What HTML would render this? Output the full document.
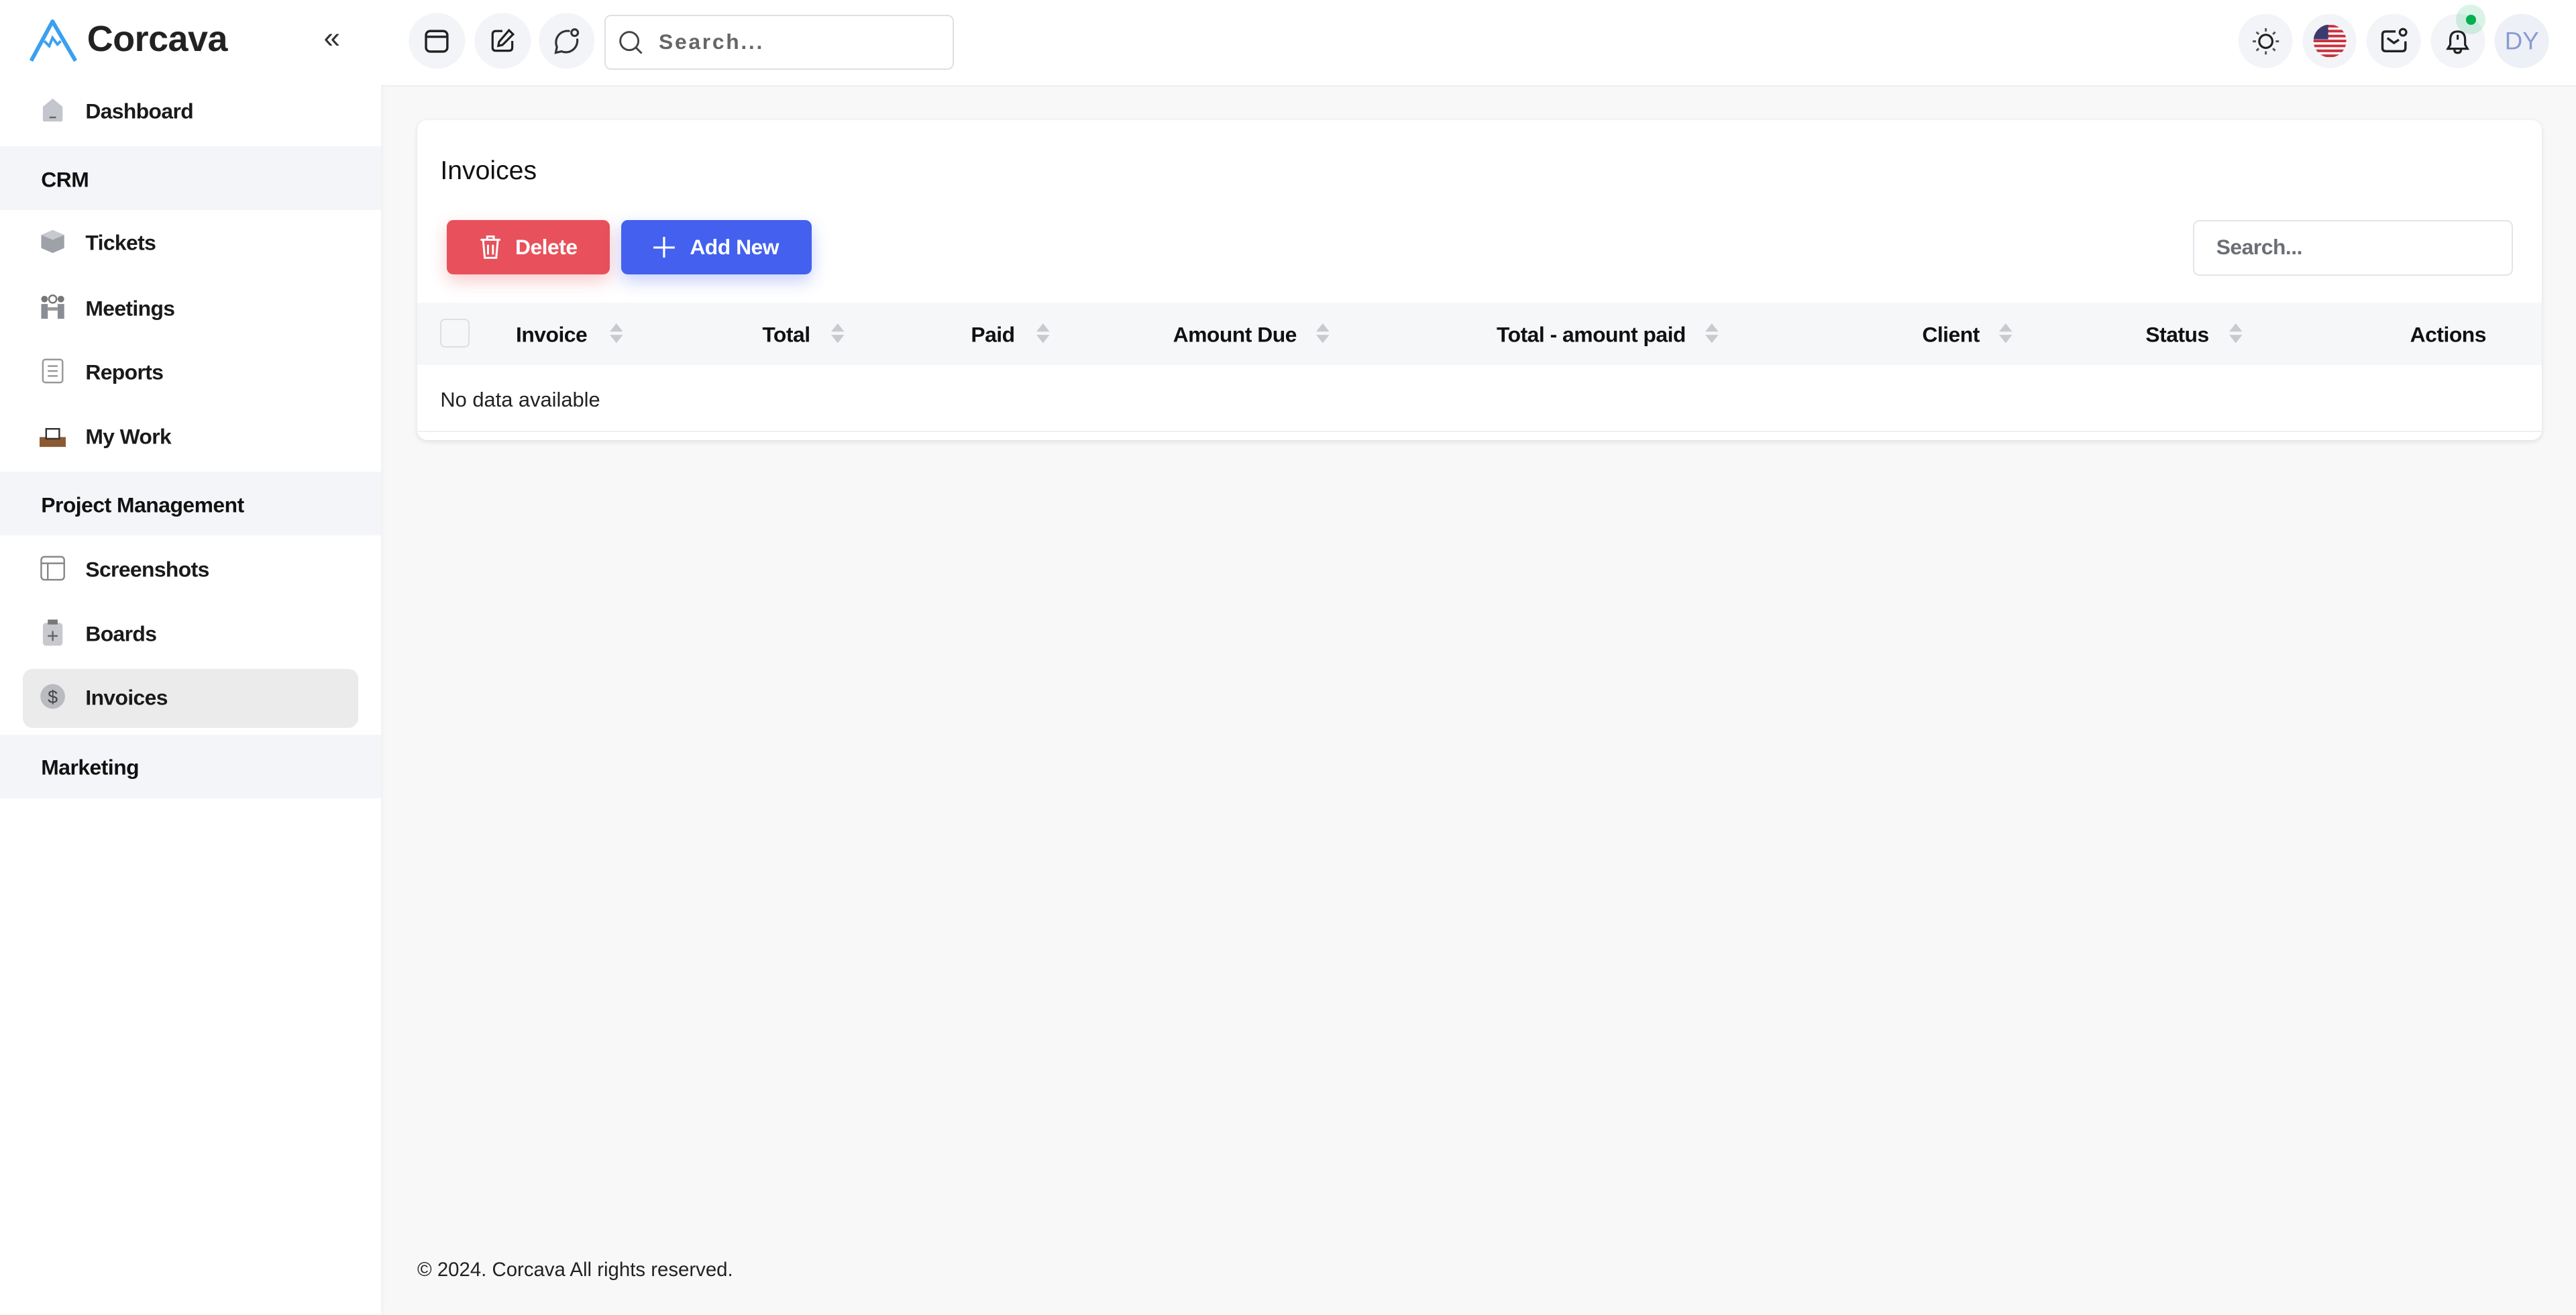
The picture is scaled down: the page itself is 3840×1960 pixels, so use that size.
<!DOCTYPE html>
<html><head><meta charset="utf-8"><style>
html,body{margin:0;padding:0;width:3840px;height:1960px;overflow:hidden;background:#f8f8f9}
#w{zoom:2.449;width:1568px;height:800px;position:relative;font-family:"Liberation Sans",sans-serif;color:#111}
.a{position:absolute}
.side{left:0;top:0;width:232px;height:800px;background:#fff;box-shadow:1px 0 3px rgba(0,0,0,.04)}
.item{position:absolute;left:52px;font-size:13px;font-weight:bold;color:#1a1a1a;transform:translateY(-45%);letter-spacing:-.25px}
.band{position:absolute;left:0;width:232px;height:39px;background:#f4f5f9}
.band span{position:absolute;left:25px;top:50%;transform:translateY(-45%);font-size:13px;font-weight:bold;color:#111;letter-spacing:-.2px}
.ic{position:absolute;left:24px;width:16px;height:16px;transform:translateY(-50%)}
.hdr{left:232px;top:0;width:1336px;height:52px;background:#fff;border-bottom:1px solid #eceef1}
.cb{position:absolute;width:34px;height:34px;border-radius:50%;background:#f3f4f7;transform:translate(-50%,-50%);top:25px;display:flex;align-items:center;justify-content:center}
.card{left:254px;top:73px;width:1293px;height:195px;background:#fff;border-radius:6px;box-shadow:0 1px 3px rgba(0,0,0,.1)}
.th{position:absolute;top:203px;font-size:13px;font-weight:bold;transform:translateY(-45%);letter-spacing:-.2px}
.sort{position:absolute;top:197px;width:8px;height:12px}
</style></head><body><div id="w">
<div class="a side">
<svg class="a" style="left:18px;top:11px" width="29" height="27" viewBox="0 0 29 27"><path d="M1 26 L14 2 L28 26" fill="none" stroke="#3aa0f0" stroke-width="2.4" stroke-linejoin="round"/><path d="M9 14 L12 17 L14 12 L17 16 L19 14" fill="none" stroke="#3aa0f0" stroke-width="1.6"/></svg>
<div class="a" style="left:53px;top:11px;font-size:22px;font-weight:bold;color:#222;letter-spacing:-.2px">Corcava</div>
<div class="a" style="left:197px;top:13px;font-size:18px;color:#333">«</div>
<svg class="ic" style="top:67px" viewBox="0 0 16 16"><path d="M2 6 L8 1 L14 6 V14 Q14 15 13 15 H3 Q2 15 2 14Z" fill="#c3c6cc"/><rect x="6" y="12" width="4" height="1" fill="#666"/></svg>
<div class="item" style="top:67px">Dashboard</div>
<div class="band" style="top:89px"><span>CRM</span></div>
<svg class="ic" style="top:147px" viewBox="0 0 16 16"><path d="M8 1 L15 4 V12 L8 15 L1 12 V4Z" fill="#9ea1a8"/><path d="M1 4 L8 7 L15 4 L8 1Z" fill="#c7c9ce"/></svg>
<div class="item" style="top:147px">Tickets</div>
<svg class="ic" style="top:187px" viewBox="0 0 16 16"><circle cx="3" cy="3" r="2" fill="#777"/><circle cx="13" cy="3" r="2" fill="#777"/><circle cx="8" cy="3" r="2.3" fill="none" stroke="#777"/><rect x="1" y="6" width="4" height="9" fill="#8a8d94"/><rect x="11" y="6" width="4" height="9" fill="#8a8d94"/><rect x="5" y="8" width="6" height="2" fill="#999"/></svg>
<div class="item" style="top:187px">Meetings</div>
<svg class="ic" style="top:226px" viewBox="0 0 16 16"><rect x="2" y="1" width="12" height="14" rx="1.5" fill="none" stroke="#999"/><path d="M5 5h6M5 8h6M5 11h6" stroke="#999"/></svg>
<div class="item" style="top:226px">Reports</div>
<svg class="ic" style="top:265px" viewBox="0 0 16 16"><rect x="0" y="9" width="16" height="6" fill="#8b5a33"/><rect x="4" y="4" width="8" height="6" fill="#fff" stroke="#333"/></svg>
<div class="item" style="top:265px">My Work</div>
<div class="band" style="top:287px"><span>Project Management</span></div>
<svg class="ic" style="top:346px" viewBox="0 0 16 16"><rect x="1" y="1" width="14" height="14" rx="2" fill="none" stroke="#888"/><path d="M1 5h14M5 5v10" stroke="#888"/></svg>
<div class="item" style="top:346px">Screenshots</div>
<svg class="ic" style="top:385px" viewBox="0 0 16 16"><rect x="2" y="2" width="12" height="14" rx="2" fill="#c7c9ce"/><rect x="5" y="0" width="6" height="3" fill="#777"/><path d="M8 7v6M5 10h6" stroke="#666"/></svg>
<div class="item" style="top:385px">Boards</div>
<div class="a" style="left:14px;top:407px;width:204px;height:36px;background:#ebebeb;border-radius:6px"></div>
<svg class="ic" style="top:424px" viewBox="0 0 16 16"><circle cx="8" cy="8" r="7.5" fill="#b9bbc0"/><text x="8" y="12" font-size="11" text-anchor="middle" fill="#444" font-family="Liberation Sans">$</text></svg>
<div class="item" style="top:424px">Invoices</div>
<div class="band" style="top:447px"><span>Marketing</span></div>
</div>
<div class="a hdr"></div>
<div class="cb" style="left:266px"><svg width="16" height="16" viewBox="0 0 16 16"><rect x="1.5" y="2" width="13" height="12.5" rx="2.5" fill="none" stroke="#222" stroke-width="1.4"/><path d="M1.5 5.5h13" stroke="#222" stroke-width="1.4"/></svg></div>
<div class="cb" style="left:306px"><svg width="16" height="16" viewBox="0 0 16 16"><path d="M8 2H4Q2 2 2 4v8q0 2 2 2h8q2 0 2-2V8" fill="none" stroke="#222" stroke-width="1.3"/><path d="M12 1.5l2.5 2.5L8 10.5 5.5 11 6 8.5Z" fill="none" stroke="#222" stroke-width="1.3"/></svg></div>
<div class="cb" style="left:345px"><svg width="18" height="18" viewBox="0 0 18 18"><path d="M10.5 2.8A7 7 0 0 0 3.2 12.5L2.5 16 6 15.2A7 7 0 0 0 15.6 8" fill="none" stroke="#333" stroke-width="1.3" stroke-linecap="round"/><circle cx="14" cy="3.8" r="2" fill="none" stroke="#333" stroke-width="1.3"/></svg></div>
<div class="a" style="left:368px;top:9px;width:211px;height:32px;border:1px solid #dde0e6;border-radius:4px;background:#fff"></div>
<svg class="a" style="left:376px;top:18px" width="16" height="16" viewBox="0 0 16 16"><circle cx="7" cy="7" r="5.5" fill="none" stroke="#444" stroke-width="1.2"/><path d="M11 11l3.5 3.5" stroke="#444" stroke-width="1.2"/></svg>
<div class="a" style="left:401px;top:18px;font-size:13px;font-weight:bold;letter-spacing:1.1px;color:#666">Search...</div>
<div class="cb" style="left:1379px;width:33px;height:33px"><svg width="18" height="18" viewBox="0 0 18 18"><circle cx="9" cy="9" r="4" fill="none" stroke="#222" stroke-width="1.3"/><path d="M9 1v2M9 15v2M1 9h2M15 9h2M3.3 3.3l1.4 1.4M13.3 13.3l1.4 1.4M3.3 14.7l1.4-1.4M13.3 4.7l1.4-1.4" stroke="#555" stroke-width="1.2"/></svg></div>
<div class="cb" style="left:1418px;width:33px;height:33px"><svg width="20" height="20" viewBox="0 0 20 20"><defs><clipPath id="c"><circle cx="10" cy="10" r="10"/></clipPath></defs><g clip-path="url(#c)"><rect width="20" height="20" fill="#fff"/><path d="M0 1h20M0 4h20M0 7h20M0 10h20M0 13h20M0 16h20M0 19h20" stroke="#c8323f" stroke-width="1.6"/><rect width="9" height="9" fill="#3c3b6e"/></g></svg></div>
<div class="cb" style="left:1457px;width:33px;height:33px"><svg width="18" height="18" viewBox="0 0 18 18"><path d="M10 3H4Q2 3 2 5v8q0 2 2 2h10q2 0 2-2V9" fill="none" stroke="#222" stroke-width="1.4"/><path d="M5 7l4 3 3-2" fill="none" stroke="#222" stroke-width="1.4"/><circle cx="14.5" cy="3.5" r="2" fill="none" stroke="#222" stroke-width="1.3"/></svg></div>
<div class="cb" style="left:1496px;width:33px;height:33px"><svg width="18" height="18" viewBox="0 0 18 18"><path d="M9 3Q4.5 3 4.5 8v3L3 13.5h12L13.5 11V8Q13.5 3 9 3ZM7 14q0 2 2 2t2-2" fill="none" stroke="#222" stroke-width="1.3"/><path d="M9 5v3" stroke="#222" stroke-width="1.3"/></svg></div>
<div class="a" style="left:1495px;top:3px;width:18px;height:18px;border-radius:50%;background:rgba(0,180,90,.15)"></div>
<div class="a" style="left:1501px;top:9px;width:6px;height:6px;border-radius:50%;background:#00b050"></div>
<div class="cb" style="left:1535px;width:33px;height:33px;background:#eef0f7;color:#8a9bd0;font-size:15px">DY</div>
<div class="a card"></div>
<div class="a" style="left:268px;top:95px;font-size:16px;color:#111">Invoices</div>
<div class="a" style="left:272px;top:134px;width:99px;height:33px;background:#e8505b;border-radius:4px;box-shadow:0 4px 10px rgba(232,80,91,.3);color:#fff;font-size:13px;font-weight:bold;display:flex;align-items:center;justify-content:center;gap:8px;letter-spacing:-.2px"><svg width="14" height="15" viewBox="0 0 14 15"><path d="M1 3h12M5 3V1h4v2M2.5 3l1 11h7l1-11M5.5 6v6M8.5 6v6" fill="none" stroke="#fff" stroke-width="1.2"/></svg>Delete</div>
<div class="a" style="left:378px;top:134px;width:116px;height:33px;background:#4361ee;border-radius:4px;box-shadow:0 4px 10px rgba(67,97,238,.3);color:#fff;font-size:13px;font-weight:bold;display:flex;align-items:center;justify-content:center;gap:9px;letter-spacing:-.2px"><svg width="13" height="13" viewBox="0 0 13 13"><path d="M6.5 0v13M0 6.5h13" stroke="#fff" stroke-width="1.3"/></svg>Add New</div>
<div class="a" style="left:1335px;top:134px;width:193px;height:32px;border:1px solid #e1e4ea;border-radius:4px"></div>
<div class="a" style="left:1349px;top:143px;font-size:13px;font-weight:bold;color:#6b6e76;letter-spacing:-.2px">Search...</div>
<div class="a" style="left:254px;top:184px;width:1293px;height:38px;background:#f6f7f9"></div>
<div class="a" style="left:268px;top:194px;width:16px;height:16px;border:1px solid #dcdfe4;border-radius:3px;background:#f6f7f9"></div>
<div class="th" style="left:314px">Invoice</div>
<div class="th" style="left:464px">Total</div>
<div class="th" style="left:591px">Paid</div>
<div class="th" style="left:714px">Amount Due</div>
<div class="th" style="left:911px">Total - amount paid</div>
<div class="th" style="left:1170px">Client</div>
<div class="th" style="left:1306px">Status</div>
<div class="th" style="left:1467px">Actions</div>
<svg class="sort" style="left:371px" viewBox="0 0 8 12"><path d="M4 0L8 5H0ZM0 7h8L4 12Z" fill="#c8cad0"/></svg>
<svg class="sort" style="left:506px" viewBox="0 0 8 12"><path d="M4 0L8 5H0ZM0 7h8L4 12Z" fill="#c8cad0"/></svg>
<svg class="sort" style="left:631px" viewBox="0 0 8 12"><path d="M4 0L8 5H0ZM0 7h8L4 12Z" fill="#c8cad0"/></svg>
<svg class="sort" style="left:801px" viewBox="0 0 8 12"><path d="M4 0L8 5H0ZM0 7h8L4 12Z" fill="#c8cad0"/></svg>
<svg class="sort" style="left:1038px" viewBox="0 0 8 12"><path d="M4 0L8 5H0ZM0 7h8L4 12Z" fill="#c8cad0"/></svg>
<svg class="sort" style="left:1217px" viewBox="0 0 8 12"><path d="M4 0L8 5H0ZM0 7h8L4 12Z" fill="#c8cad0"/></svg>
<svg class="sort" style="left:1357px" viewBox="0 0 8 12"><path d="M4 0L8 5H0ZM0 7h8L4 12Z" fill="#c8cad0"/></svg>
<div class="a" style="left:268px;top:236px;font-size:12.6px;color:#222">No data available</div>
<div class="a" style="left:254px;top:262px;width:1293px;height:1px;background:#eef0f4"></div>
<div class="a" style="left:254px;top:766px;font-size:12px;color:#222">© 2024. Corcava All rights reserved.</div>
</div></body></html>
